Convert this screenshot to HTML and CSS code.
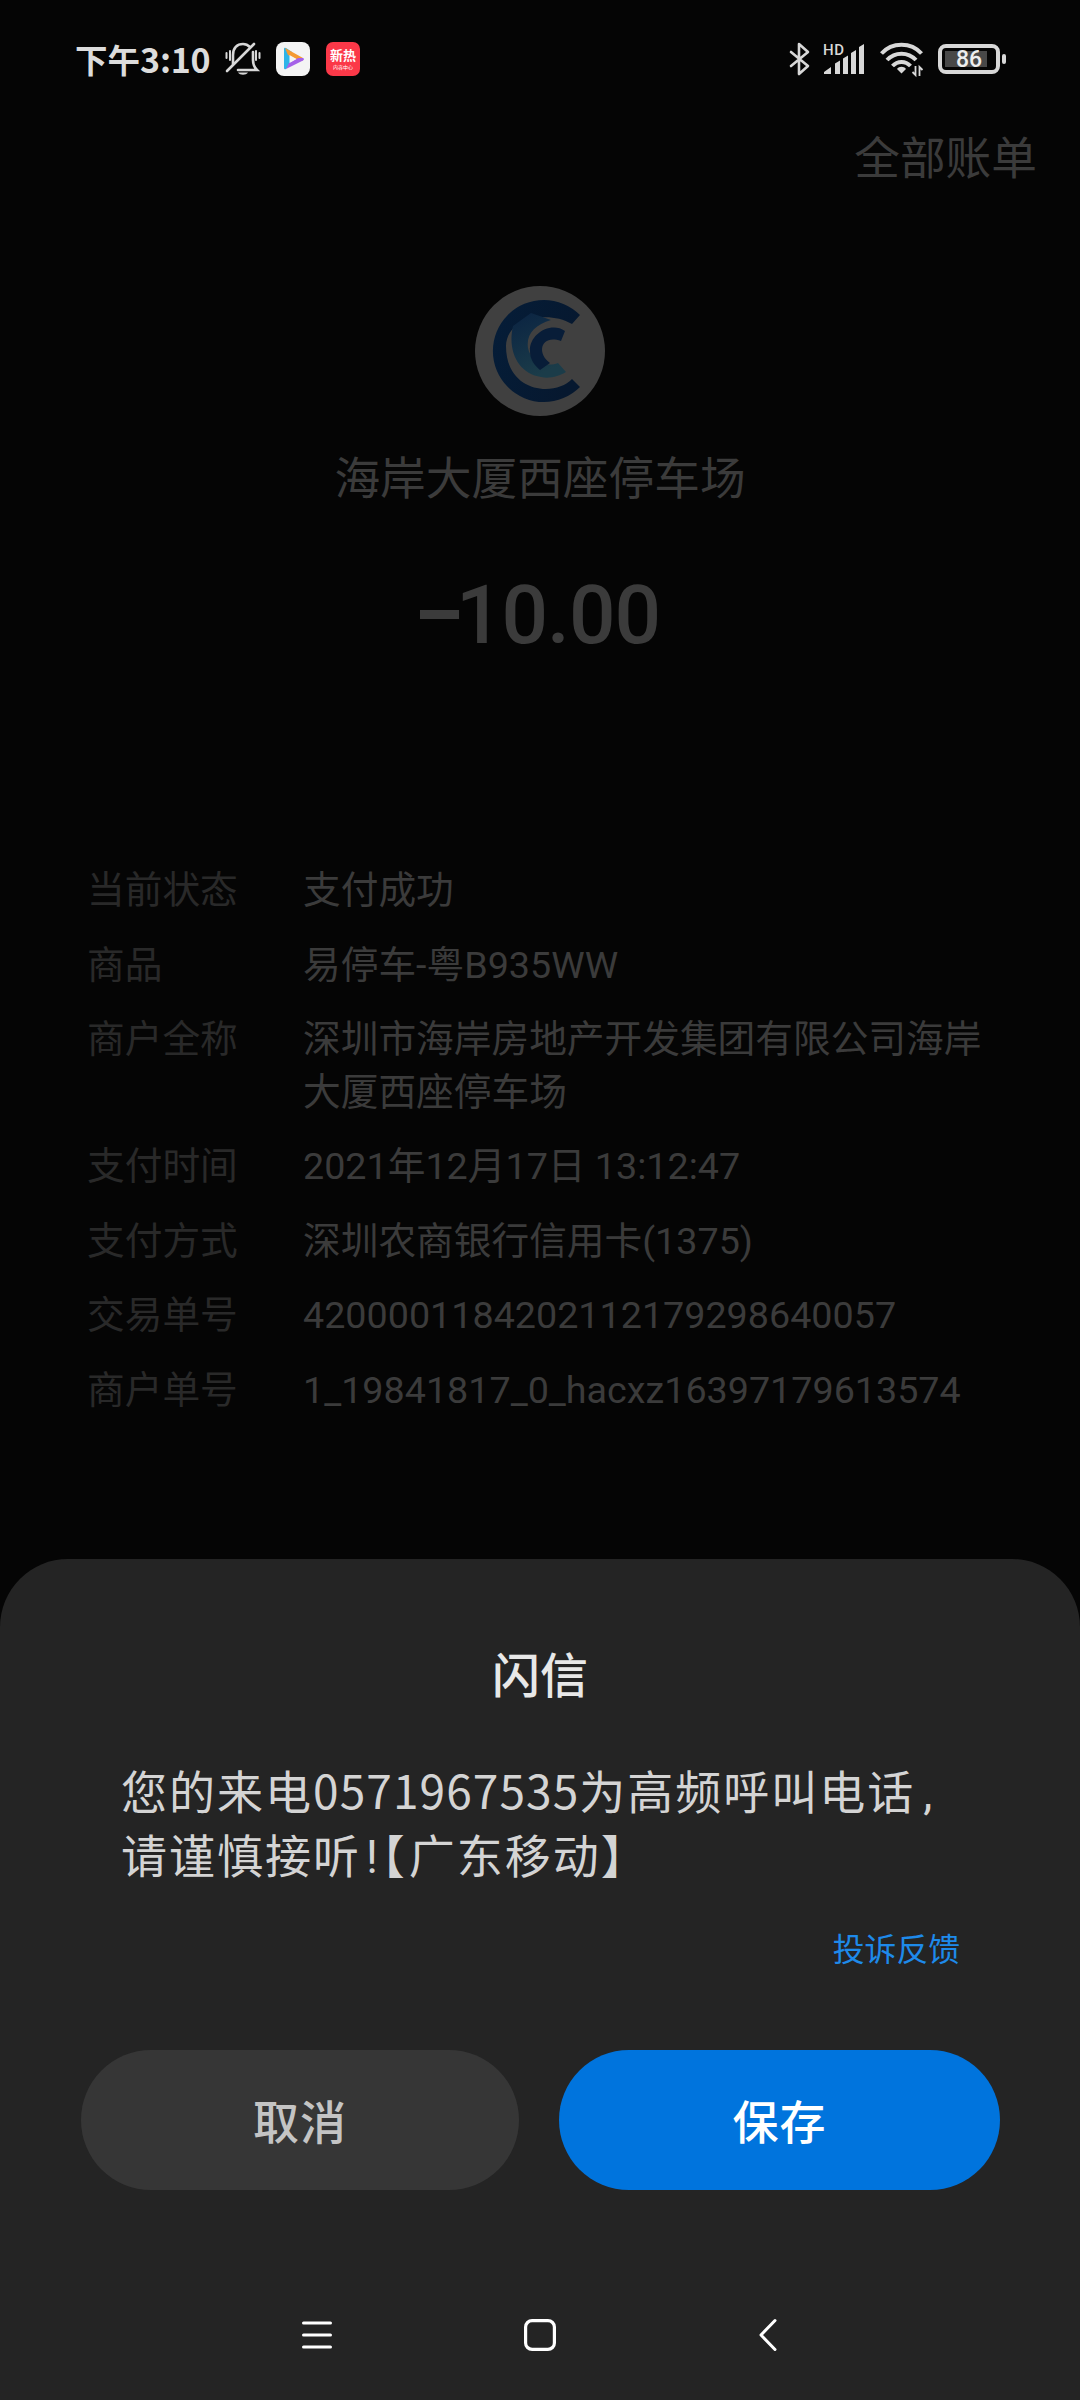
FILE: index.html
```html
<!DOCTYPE html>
<html lang="zh-CN">
<head>
    <meta charset="UTF-8">
    <meta name="viewport" content="width=device-width, initial-scale=1.0">
    <title>账单详情</title>
    <link rel="stylesheet" href="styles.css">
</head>
<body>
    <header class="status-bar">
        <div class="status-left">
            <span class="time">下午<span class="clock">3:10</span></span>
            <svg class="bell" width="36" height="34" viewBox="0 0 36 34" fill="none" stroke="#d8d8d8" stroke-width="2.6" stroke-linecap="round">
                <path d="M8 22V13c0-7 4-11 10-11 3 0 5 1 7 3M28 10v8c0 4 1 7 4 10H13"/>
                <path d="M2 29L29 2"/>
                <path d="M1.500 11v5M5 9v9M31 9v9M34.500 11v5" stroke-width="2"/>
                <path d="M13 30.500h10c-2 3-8 3-10 0z" fill="#d8d8d8" stroke="none"/>
            </svg>
            <svg class="app-play" width="34" height="34" viewBox="0 0 34 34">
                <rect width="34" height="34" rx="8" fill="#f4f4f4"/>
                <path d="M8 7q0-2 2-1l6 4-2 13-4 4q-2 1-2-1z" fill="#2db4e8"/>
                <path d="M9 6l18 10-5 2-10-5z" fill="#f59a32"/>
                <path d="M27 16q2 1 0 2.500L10 27l3-6 9-5z" fill="#a562e8"/>
                <path d="M13.500 13v8l7-4z" fill="#f4f4f4"/>
            </svg>
            <span class="app-hot"><b>新热</b><i>内容中心</i></span>
        </div>
        <div class="status-right">
            <svg class="bluetooth" width="22" height="34" viewBox="0 0 22 34" fill="none" stroke="#d8d8d8" stroke-width="2.6" stroke-linejoin="round" stroke-linecap="round">
                <path d="M2 10l17 14-9 8V2l9 8L2 24"/>
            </svg>
            <svg class="signal" width="42" height="32" viewBox="0 0 42 32" fill="#d8d8d8">
                <text x="0" y="11.500" class="hd">HD</text>
                <path d="M1 31v-2l7-5v7zM12 20.500l5-3V31h-5zM20 15.500l5-3V31h-5zM28 10l5-3v24h-5zM36 4l5-3v30h-5z"/>
            </svg>
            <svg class="wifi" width="44" height="36" viewBox="0 0 44 36" fill="none" stroke="#d8d8d8" stroke-width="4">
                <path d="M1.500 12.500C12 .8 31 .8 41.500 12.500M7 19c8-8.500 21-8.500 29 0M12.500 25c5-5.500 13-5.500 18 0"/>
                <path d="M17 28c2-3 7-3 9 0l-4.500 4.500z" fill="#d8d8d8" stroke="none"/>
                <path d="M35.500 25v9l-3-3M39.500 35v-9l3 3" stroke-width="1.800"/>
            </svg>
            <div class="battery"><span class="battery-box">86</span><span class="battery-tip"></span></div>
        </div>
    </header>

    <main class="bill">
        <a class="all-bills">全部账单</a>
        <svg class="logo" width="130" height="130" viewBox="0 0 130 130">
            <defs>
                <linearGradient id="ring" x1="0" y1="0" x2="1" y2="0.300">
                    <stop offset="0" stop-color="#051d38"/>
                    <stop offset="1" stop-color="#06182f"/>
                </linearGradient>
                <linearGradient id="wave" x1="0" y1="0" x2="0.400" y2="1">
                    <stop offset="0" stop-color="#0a2342"/>
                    <stop offset="1" stop-color="#1b3c49"/>
                </linearGradient>
            </defs>
            <circle cx="65" cy="65" r="65" fill="#404040"/>
            <path d="M105 29A51 51 0 1 0 105 101L97 93C80 111 31 107 31 60C31 51 36 43 43 38C57 30 80 28 97 38Z" fill="url(#ring)"/>
            <path d="M38 40C32 66 44 88 66 91C75 93 84 90 91 86L83 77C71 82 55 75 53 62C51 48 60 39 76 34L56 27Z" fill="url(#wave)"/>
            <path d="M90 45C76 35 54 48 55 65C55 73 59 79 65 84L75 77C61 67 66 48 86 55Z" fill="#081d38"/>
        </svg>
        <h1 class="merchant">海岸大厦西座停车场</h1>
        <p class="amount"><span class="minus"></span>10.00</p>

        <dl class="details">
            <dt>当前状态</dt><dd>支付成功</dd>
            <dt>商品</dt><dd>易停车-粤B935WW</dd>
            <dt>商户全称</dt><dd>深圳市海岸房地产开发集团有限公司海岸大厦西座停车场</dd>
            <dt>支付时间</dt><dd>2021年12月17日 13:12:47</dd>
            <dt>支付方式</dt><dd>深圳农商银行信用卡(1375)</dd>
            <dt>交易单号</dt><dd>4200001184202112179298640057</dd>
            <dt>商户单号</dt><dd>1_19841817_0_hacxz16397179613574</dd>
        </dl>
    </main>

    <section class="sheet">
        <h2>闪信</h2>
        <p class="message">您的来电<span class="phone">0571967535</span>为高频呼叫电话<span class="comma">,</span><br>请谨慎接听<span class="mark">!</span><span class="bracket">【</span>广东移动】</p>
        <a class="feedback">投诉反馈</a>
        <div class="buttons">
            <button class="cancel">取消</button>
            <button class="save">保存</button>
        </div>
        <nav class="nav-bar">
            <svg width="32" height="34" viewBox="0 0 32 34" stroke="#fff" stroke-width="3" stroke-linecap="round">
                <path d="M2.500 5h27M2.500 17h27M2.500 29h27"/>
            </svg>
            <svg class="home" width="34" height="34" viewBox="0 0 34 34" fill="none" stroke="#fff" stroke-width="3.200">
                <rect x="2.600" y="2.600" width="28.800" height="28.800" rx="6.500"/>
            </svg>
            <svg width="20" height="34" viewBox="0 0 20 34" fill="none" stroke="#fff" stroke-width="3" stroke-linecap="round" stroke-linejoin="round">
                <path d="M17 2.500L3 17l14 14.500"/>
            </svg>
        </nav>
    </section>
</body>
</html>
```

FILE: styles.css
```css
* {
    box-sizing: border-box;
    margin: 0;
    padding: 0;
}
body {
    width: 1080px;
    height: 2400px;
    display: flex;
    flex-direction: column;
    overflow: hidden;
    background: #050505;
    font-family: Roboto, "Noto Sans CJK SC", sans-serif;
}
svg {
    display: block;
    flex: none;
    overflow: visible;
}

/* barra de estado */
.status-bar {
    height: 118px;
    padding: 0 74px 0 75px;
    display: flex;
    justify-content: space-between;
    color: #dcdcdc;
}
.status-left,
.status-right {
    height: 118px;
    display: flex;
    align-items: center;
}
.time {
    width: 136px;
    margin-right: 14px;
    padding-bottom: 2px;
    font-size: 32.5px;
    font-weight: 700;
    white-space: nowrap;
}
.clock {
    font-family: "Noto Sans CJK SC", sans-serif;
    font-size: 34px;
    font-weight: 600;
    letter-spacing: -0.2px;
}
.bell {
    margin-right: 15px;
}
.app-play {
    margin-right: 16px;
}
.app-hot {
    width: 34px;
    height: 34px;
    border-radius: 7px;
    background: #fb3848;
    color: #fff;
    display: flex;
    flex-direction: column;
    align-items: center;
    padding-top: 6px;
}
.app-hot b {
    font-size: 13px;
    line-height: 15px;
}
.app-hot i {
    font-size: 5px;
    line-height: 8px;
    font-style: normal;
}
.bluetooth {
    margin-right: 12px;
}
.signal {
    margin-right: 15px;
}
.hd {
    font: 500 15px Roboto, sans-serif;
    letter-spacing: 0.5px;
}
.wifi {
    margin-right: 14px;
}
.battery {
    display: flex;
    align-items: center;
    gap: 2px;
}
.battery-box {
    width: 62px;
    height: 30px;
    border: 4px solid #d8d8d8;
    border-radius: 8px;
    background: linear-gradient(#484848, #484848) 3px 3px / 42px 16px no-repeat;
    font-size: 23px;
    font-weight: 500;
    line-height: 23px;
    text-align: center;
    color: #eee;
}
.battery-tip {
    width: 4px;
    height: 10px;
    border-radius: 2px;
    background: #d8d8d8;
}

/* detalle de la cuenta */
.bill {
    height: 1441px;
    display: flex;
    flex-direction: column;
    align-items: center;
    color: #3b3b3b;
}
.all-bills {
    align-self: flex-end;
    margin: 2px 43px 0 0;
    height: 80px;
    line-height: 80px;
    font-size: 45.7px;
}
.logo {
    margin-top: 86px;
}
.merchant {
    margin-top: 29px;
    font-size: 45.7px;
    font-weight: 400;
    line-height: 70px;
}
.amount {
    display: flex;
    align-items: center;
    margin-top: 50px;
    font-size: 82px;
    font-weight: 500;
    line-height: 100px;
    letter-spacing: -1px;
}
.minus {
    width: 39px;
    height: 9px;
    margin: 0 -3px 2px 0;
    background: #3b3b3b;
}
.details {
    width: 100%;
    margin-top: 199px;
    padding: 0 92px 0 87px;
    display: grid;
    grid-template-columns: 216px 1fr;
    row-gap: 21.8px;
    font-size: 37.7px;
    line-height: 52.7px;
}
.details dt {
    color: #292929;
}

/* aviso inferior */
.sheet {
    height: 841px;
    display: flex;
    flex-direction: column;
    border-radius: 68px 68px 0 0;
    background: #242424;
    color: #d4d4d4;
}
.sheet h2 {
    margin-top: 82px;
    font-size: 48px;
    font-weight: 500;
    line-height: 72px;
    text-align: center;
    color: #e8e8e8;
}
.message {
    margin: 44px 0 0 121px;
    font-size: 46px;
    line-height: 64px;
    letter-spacing: 2px;
    white-space: nowrap;
}
.phone {
    font-family: "Noto Sans CJK SC", sans-serif;
    font-size: 46px;
    letter-spacing: 1.1px;
}
.comma {
    margin-left: 8px;
}
.mark {
    margin-left: 5px;
}
.bracket {
    font-feature-settings: "halt";
    margin: 0 2px;
}
.feedback {
    align-self: flex-end;
    margin: 37px 120px 0 0;
    font-size: 31.8px;
    line-height: 48px;
    color: #1e8aea;
}
.buttons {
    display: flex;
    justify-content: space-between;
    margin-top: 76px;
    padding: 0 80px 0 81px;
}
.buttons button {
    width: 438px;
    height: 140px;
    padding-bottom: 3px;
    border: none;
    border-radius: 70px;
    font-family: inherit;
    font-size: 46px;
    font-weight: 500;
    letter-spacing: 1px;
}
.buttons .cancel {
    background: #363636;
    color: #c4c4c4;
}
.buttons .save {
    width: 441px;
    background: #0074dd;
    color: #fff;
}
.nav-bar {
    display: flex;
    justify-content: space-between;
    margin-top: 128px;
    padding: 0 302px 0 301px;
}
.home {
    margin-right: 12px;
}
```
